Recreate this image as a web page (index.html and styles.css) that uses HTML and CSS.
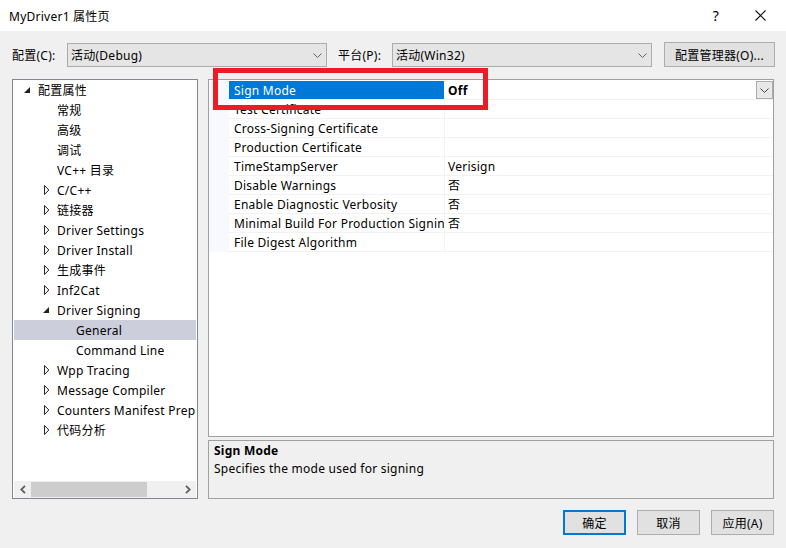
FILE: index.html
```html
<!DOCTYPE html>
<html>
<head>
<meta charset="utf-8">
<link rel="stylesheet" href="styles.css">
</head>
<body>
<div class="window">
  <div class="titlebar">
    <span class="title">MyDriver1 属性页</span>
    <div class="tctrls">
      <span class="tbtn help">?</span>
      <span class="tbtn"><svg width="11" height="11" viewBox="0 0 11 11"><path d="M0.5 0.5L10.5 10.5M10.5 0.5L0.5 10.5" stroke="#111" stroke-width="1.1" fill="none"/></svg></span>
    </div>
  </div>

  <div class="toolbar">
    <span class="lbl lbl1">配置(C):</span>
    <div class="combo"><span>活动(Debug)</span><svg class="chev" width="9" height="5" viewBox="0 0 9 5"><path d="M0.5 0.5L4.5 4.5L8.5 0.5" stroke="#606060" fill="none"/></svg></div>
    <span class="lbl lbl2">平台(P):</span>
    <div class="combo"><span>活动(Win32)</span><svg class="chev" width="9" height="5" viewBox="0 0 9 5"><path d="M0.5 0.5L4.5 4.5L8.5 0.5" stroke="#606060" fill="none"/></svg></div>
    <div class="btn cfgbtn">配置管理器(O)...</div>
  </div>

  <div class="main">
    <div class="tree">
      <div class="tree-items">
        <div class="row l0"><span class="exp"><svg width="6" height="6" viewBox="0 0 6 6"><path d="M6 0V6H0Z" fill="#222"/></svg></span>配置属性</div>
        <div class="row l1"><span class="exp"></span>常规</div>
        <div class="row l1"><span class="exp"></span>高级</div>
        <div class="row l1"><span class="exp"></span>调试</div>
        <div class="row l1"><span class="exp"></span>VC++ 目录</div>
        <div class="row l1"><span class="exp"><svg class="col" width="6" height="10" viewBox="0 0 6 10"><path d="M0.5 0.5L4.8 5L0.5 9.5Z" stroke="#222" fill="none"/></svg></span>C/C++</div>
        <div class="row l1"><span class="exp"><svg class="col" width="6" height="10" viewBox="0 0 6 10"><path d="M0.5 0.5L4.8 5L0.5 9.5Z" stroke="#222" fill="none"/></svg></span>链接器</div>
        <div class="row l1"><span class="exp"><svg class="col" width="6" height="10" viewBox="0 0 6 10"><path d="M0.5 0.5L4.8 5L0.5 9.5Z" stroke="#222" fill="none"/></svg></span>Driver Settings</div>
        <div class="row l1"><span class="exp"><svg class="col" width="6" height="10" viewBox="0 0 6 10"><path d="M0.5 0.5L4.8 5L0.5 9.5Z" stroke="#222" fill="none"/></svg></span>Driver Install</div>
        <div class="row l1"><span class="exp"><svg class="col" width="6" height="10" viewBox="0 0 6 10"><path d="M0.5 0.5L4.8 5L0.5 9.5Z" stroke="#222" fill="none"/></svg></span>生成事件</div>
        <div class="row l1"><span class="exp"><svg class="col" width="6" height="10" viewBox="0 0 6 10"><path d="M0.5 0.5L4.8 5L0.5 9.5Z" stroke="#222" fill="none"/></svg></span>Inf2Cat</div>
        <div class="row l1"><span class="exp"><svg width="6" height="6" viewBox="0 0 6 6"><path d="M6 0V6H0Z" fill="#222"/></svg></span>Driver Signing</div>
        <div class="row l2 sel"><span class="exp"></span>General</div>
        <div class="row l2"><span class="exp"></span>Command Line</div>
        <div class="row l1"><span class="exp"><svg class="col" width="6" height="10" viewBox="0 0 6 10"><path d="M0.5 0.5L4.8 5L0.5 9.5Z" stroke="#222" fill="none"/></svg></span>Wpp Tracing</div>
        <div class="row l1"><span class="exp"><svg class="col" width="6" height="10" viewBox="0 0 6 10"><path d="M0.5 0.5L4.8 5L0.5 9.5Z" stroke="#222" fill="none"/></svg></span>Message Compiler</div>
        <div class="row l1"><span class="exp"><svg class="col" width="6" height="10" viewBox="0 0 6 10"><path d="M0.5 0.5L4.8 5L0.5 9.5Z" stroke="#222" fill="none"/></svg></span><span class="clip">Counters Manifest Preprocessor</span></div>
        <div class="row l1"><span class="exp"><svg class="col" width="6" height="10" viewBox="0 0 6 10"><path d="M0.5 0.5L4.8 5L0.5 9.5Z" stroke="#222" fill="none"/></svg></span>代码分析</div>
      </div>
      <div class="hscroll">
        <span class="sarrow"><svg width="6" height="9" viewBox="0 0 6 9"><path d="M5 0.8L1.3 4.5L5 8.2" stroke="#606060" stroke-width="1.8" fill="none"/></svg></span>
        <span class="thumb"></span>
        <span class="track"></span>
        <span class="sarrow"><svg width="6" height="9" viewBox="0 0 6 9"><path d="M1 0.8L4.7 4.5L1 8.2" stroke="#606060" stroke-width="1.8" fill="none"/></svg></span>
      </div>
    </div>

    <div class="rightcol">
      <div class="grid">
        <div class="prow">
          <span class="gut"></span><span class="pname selname">Sign Mode</span><span class="pval bold">Off<span class="ddbtn"><svg width="9" height="5" viewBox="0 0 9 5"><path d="M0.5 0.5L4.5 4.5L8.5 0.5" stroke="#444" fill="none"/></svg></span></span>
        </div>
        <div class="prow"><span class="gut"></span><span class="pname">Test Certificate</span><span class="pval"></span></div>
        <div class="prow"><span class="gut"></span><span class="pname">Cross-Signing Certificate</span><span class="pval"></span></div>
        <div class="prow"><span class="gut"></span><span class="pname">Production Certificate</span><span class="pval"></span></div>
        <div class="prow"><span class="gut"></span><span class="pname">TimeStampServer</span><span class="pval">Verisign</span></div>
        <div class="prow"><span class="gut"></span><span class="pname">Disable Warnings</span><span class="pval">否</span></div>
        <div class="prow"><span class="gut"></span><span class="pname">Enable Diagnostic Verbosity</span><span class="pval">否</span></div>
        <div class="prow"><span class="gut"></span><span class="pname">Minimal Build For Production Signing</span><span class="pval">否</span></div>
        <div class="prow"><span class="gut"></span><span class="pname">File Digest Algorithm</span><span class="pval"></span></div>
      </div>
      <div class="desc">
        <div class="dtitle">Sign Mode</div>
        <div>Specifies the mode used for signing</div>
      </div>
    </div>
  </div>

  <div class="buttons">
    <div class="btn dbtn default">确定</div>
    <div class="btn dbtn">取消</div>
    <div class="btn dbtn">应用(A)</div>
  </div>

  <div class="annot"></div>
</div>
</body>
</html>
```

FILE: styles.css
```css
* { box-sizing: border-box; }
html, body { margin: 0; padding: 0; }
body {
  width: 786px;
  height: 548px;
  overflow: hidden;
  font-family: "Noto Sans", "Noto Sans CJK SC", sans-serif;
  font-size: 12px;
  letter-spacing: 0.25px;
  color: #000;
}
.window {
  position: relative;
  width: 786px;
  height: 548px;
  background: #f0f0f0;
  display: flex;
  flex-direction: column;
}
.titlebar {
  height: 31px;
  background: #fff;
  display: flex;
  align-items: center;
  padding-left: 9px;
  flex: none;
}
.title { font-size: 12px; }
.tctrls { margin-left: auto; display: flex; padding-right: 4px; }
.tbtn {
  width: 44px;
  height: 31px;
  display: flex;
  align-items: center;
  justify-content: center;
}
.tbtn.help { font-size: 14px; }
.toolbar {
  margin-top: 12px;
  height: 24px;
  display: flex;
  align-items: center;
  padding-left: 12px;
  flex: none;
}
.lbl { white-space: nowrap; }
.lbl1 { width: 55px; }
.lbl2 { width: 54px; margin-left: 11px; }
.combo {
  width: 260px;
  height: 24px;
  background: #e5e5e5;
  border: 1px solid #acacac;
  display: flex;
  align-items: center;
  padding-left: 3px;
  padding-right: 4px;
}
.combo .chev { margin-left: auto; }
.btn {
  background: #e1e1e1;
  border: 1px solid #adadad;
  display: flex;
  align-items: center;
  justify-content: center;
}
.cfgbtn {
  width: 111px;
  height: 25px;
  margin-left: 12px;
  margin-top: -1px;
}
.main {
  margin-top: 12px;
  display: flex;
  gap: 10px;
  padding-left: 12px;
  height: 420px;
  flex: none;
}
.tree {
  width: 186px;
  height: 420px;
  border: 1px solid #828790;
  background: #fff;
  display: flex;
  flex-direction: column;
}
.tree-items {
  flex: 1;
  overflow: hidden;
  padding-left: 1px;
  padding-right: 1px;
}
.row {
  height: 20px;
  display: flex;
  align-items: center;
  white-space: nowrap;
  overflow: hidden;
}
.clip { overflow: hidden; white-space: nowrap; }
.row.l0 { padding-left: 9px; }
.row.l1 { padding-left: 28px; }
.row.l2 { padding-left: 47px; }
.row.sel { background: #cccedb; }
.exp {
  width: 15px;
  flex: none;
  display: flex;
  align-items: center;
  padding-left: 1px;
}
.exp .col { margin-left: 1px; }
.hscroll {
  height: 18px;
  flex: none;
  display: flex;
  background: #f0f0f0;
  border-top: 1px solid #fff;
  margin: 0 1px;
}
.sarrow {
  width: 17px;
  display: flex;
  align-items: center;
  justify-content: center;
}
.thumb {
  width: 116px;
  background: #cdcdcd;
  margin: 1px 0;
}
.track { flex: 1; }
.rightcol {
  width: 566px;
  display: flex;
  flex-direction: column;
  gap: 3px;
}
.grid {
  height: 358px;
  border: 1px solid #a0a0a0;
  background: #fff;
  padding-top: 1px;
  display: flex;
  flex-direction: column;
}
.prow {
  height: 19px;
  display: flex;
  flex: none;
}
.gut {
  width: 20px;
  flex: none;
  background: #f7f9fe;
}
.pname {
  width: 216px;
  flex: none;
  padding-left: 5px;
  display: flex;
  align-items: center;
  border-bottom: 1px solid #f0f2f7;
  border-right: 1px solid #f0f2f7;
  white-space: nowrap;
  overflow: hidden;
}
.pname.selname {
  background: #0078d7;
  background-clip: padding-box;
  color: #fff;
  border-right-color: #fff;
}
.pval {
  flex: 1;
  padding-left: 3px;
  display: flex;
  align-items: center;
  border-bottom: 1px solid #f0f2f7;
}
.bold { font-weight: bold; }
.ddbtn {
  margin-left: auto;
  width: 17px;
  height: 18px;
  align-self: flex-start;
  background: #e8e8e8;
  border: 1px solid #adadad;
  display: flex;
  align-items: center;
  justify-content: center;
}
.desc {
  height: 59px;
  border: 1px solid #a0a0a0;
  background: #f0f0f0;
  padding: 1px 5px 0;
  line-height: 18px;
}
.dtitle { font-weight: bold; }
.buttons {
  margin-top: 11px;
  display: flex;
  justify-content: flex-end;
  gap: 11px;
  padding-right: 12px;
  flex: none;
}
.dbtn {
  width: 63px;
  height: 25px;
}
.dbtn.default {
  border: 2px solid #0078d7;
}
.annot {
  position: absolute;
  left: 213px;
  top: 68px;
  width: 275px;
  height: 42px;
  border: 5px solid #ed1c24;
}
```
